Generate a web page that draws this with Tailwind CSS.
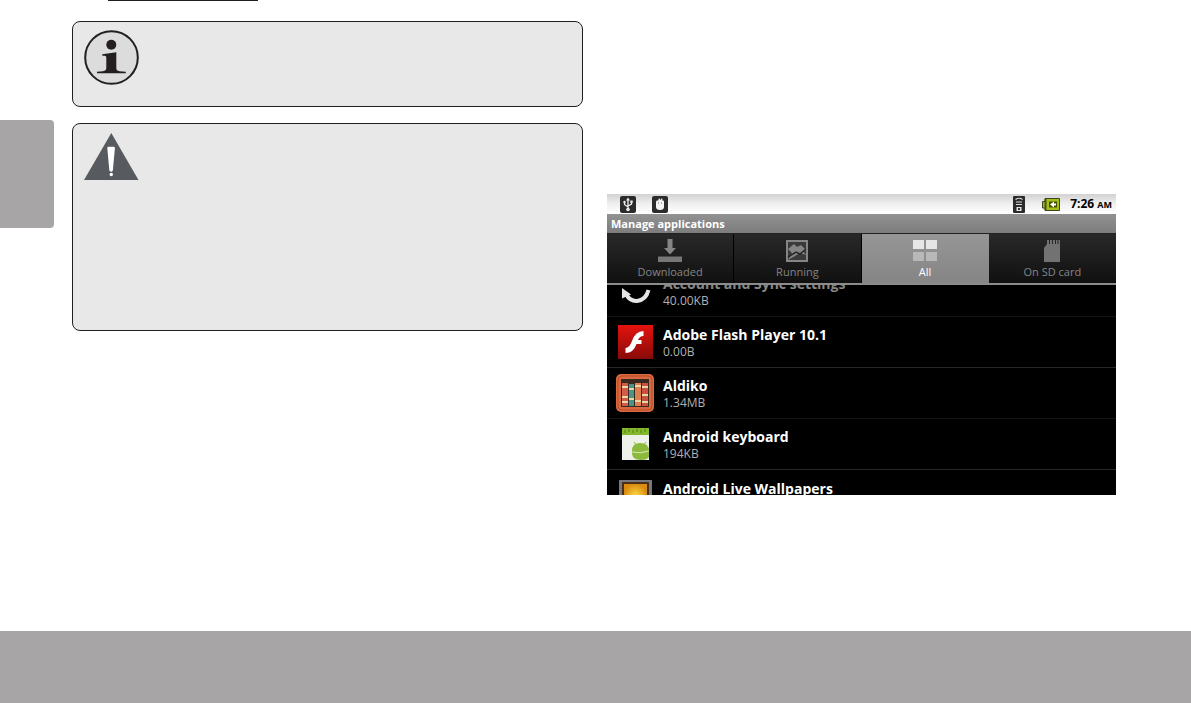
<!DOCTYPE html>
<html lang="en">
<head>
  <meta charset="UTF-8" />
  <meta name="viewport" content="width=device-width, initial-scale=1.0"/>
  <title>Manage applications</title>
  <script src="https://cdn.jsdelivr.net/npm/@tailwindcss/browser@4"></script>
</head>
<body class="bg-white min-h-screen flex flex-col font-['Open_Sans','Noto_Sans',sans-serif]">
  <main class="grow grid grid-cols-[54px_529fr_533fr] items-start pr-[75px]">
    <!-- Page side tab -->
    <aside class="mt-[120px] h-[108px] rounded-r bg-[#a7a5a6]"></aside>

    <!-- Notes -->
    <section class="ml-[18px] flex flex-col">
      <div class="ml-9 w-[150px] h-px bg-[#231f20]"></div>
      <div class="mt-5 h-[86px] rounded-lg border border-[#231f20] bg-[#e8e8e8] pl-[11px] pt-2">
        <svg class="size-[55px]" viewBox="0 0 55 55" role="img" aria-label="Note">
          <circle cx="27.5" cy="27.5" r="26.3" fill="#dcdcdc" stroke="#231f20" stroke-width="2"/>
          <circle cx="27.3" cy="14.8" r="5" fill="#231f20"/>
          <path d="M18.3 24.2l14-2V38q0 2.8 3.2 3.2l6.3.5v1.5H13v-1.5l6-.5q3.3-.4 3.3-3.2V27.5q0-1.7-1.5-1.8h-2.5z" fill="#231f20"/>
        </svg>
      </div>
      <div class="mt-4 h-[208px] rounded-lg border border-[#231f20] bg-[#e8e8e8] pl-[11px] pt-[9px]">
        <svg class="w-[55px] h-[47px]" viewBox="0 0 55 47" role="img" aria-label="Warning">
          <path d="M27.3 0L54.5 47H0z" fill="#575a5e"/>
          <path d="M23.3 15q0-1.3 1.3-1.3h5q1.3 0 1.3 1.3l-2 22q-.1 1.800-1.800 1.800t-1.800-1.800z" fill="#fff"/>
          <circle cx="27.3" cy="41.5" r="1.7" fill="#fff"/>
        </svg>
      </div>
    </section>

    <!-- Device screen -->
    <section class="ml-6 mt-[194px] h-[301px] bg-black overflow-hidden flex flex-col">
      <header class="h-5 shrink-0 flex items-center px-1 bg-linear-to-b from-[#d2d2d2] via-[#f0f0f0] to-white text-black">
        <svg class="ml-[9px] w-4 h-[17px]" viewBox="0 0 16 17">
          <rect width="16" height="17" rx="2" fill="#2b2b2b"/>
          <path d="M8 13V3M8 11L4.500 8.500V6M8 10l3.500-2V5.500" fill="none" stroke="#eee" stroke-width="1.300"/>
          <path d="M8 1.500l2 3H6z" fill="#eee"/>
          <circle cx="8" cy="13.500" r="1.800" fill="#eee"/>
          <circle cx="4.500" cy="6" r="1.200" fill="#eee"/>
          <path d="M10.300 4.500h2.400v2.400h-2.400z" fill="#eee"/>
        </svg>
        <svg class="ml-4 w-4 h-[17px]" viewBox="0 0 16 17">
          <rect width="16" height="17" rx="2" fill="#2b2b2b"/>
          <path d="M4 6l1-2 1 1 1-3 1.500 2L10 2l.8 3 1.200-.5V11q0 3-4 3t-4-3z" fill="#f4f4f4"/>
          <path d="M6.500 6v2M9.500 6v2" stroke="#aaa" stroke-width="1"/>
        </svg>
        <svg class="ml-auto w-3 h-[17px]" viewBox="0 0 12 17">
          <rect width="12" height="17" rx="1" fill="#2b2b2b"/>
          <path d="M2.500 3.500q3.500-2.500 7 0M3 6h6M3 8.500h6" fill="none" stroke="#ddd" stroke-width="1.200"/>
          <path d="M3.500 11h5v4h-5z" fill="#e5e5e5"/>
          <path d="M5 12h2v2H5z" fill="#333"/>
        </svg>
        <svg class="ml-[17px] w-[18px] h-[13px]" viewBox="0 0 18 13">
          <path d="M3 .5h14.500v12H3V10H.5V3.500H3z" fill="#a4be18" stroke="#3d4420"/>
          <path d="M3.500 1v11" stroke="#48531c" stroke-width="2"/>
          <path d="M7 3.500h8v6H7z" fill="#435000"/>
          <path d="M8 6.500l4-3v2h2v2h-2v2z" fill="#fff"/>
        </svg>
        <time class="ml-[10px] text-[12px] leading-5 font-bold">7:26 <span class="text-[9px]">AM</span></time>
      </header>
      <h1 class="h-[19px] shrink-0 px-1 bg-linear-to-b from-[#929292] to-[#7d7d7d] text-[11px] leading-[19px] font-bold text-white">Manage applications</h1>

      <nav class="h-[52px] shrink-0 grid grid-cols-4 border-t border-[#222] border-b-2 border-b-[#8c8c8c] bg-linear-to-b from-[#292929] to-[#101010] text-[11px] leading-4 text-[#858585]">
        <button type="button" class="flex flex-col items-center pt-[5px] gap-px border-r border-black">
          <svg class="size-6" viewBox="0 0 24 24">
            <path d="M9.500 0h5v9H18l-6 6.500L6 9h3.500z" fill="#858585"/>
            <path d="M0 17.500h24V23H0z" fill="#777"/>
          </svg>
          Downloaded
        </button>
        <button type="button" class="flex flex-col items-center pt-[5px] gap-px border-r border-black">
          <svg class="size-6" viewBox="0 0 24 24">
            <path d="M2 2h20v20H2z" fill="#3a3a3a" stroke="#858585" stroke-width="2"/>
            <path d="M3 10l6-5 3 3 4-2 5 5-3 1 3 4-6-2-5 3-7 4 4-7z" fill="#858585"/>
            <path d="M3 18l8-5 4 2 6-5" fill="none" stroke="#262626" stroke-width="1.500"/>
          </svg>
          Running
        </button>
        <button type="button" class="flex flex-col items-center pt-[5px] gap-px bg-linear-to-b from-[#969696] to-[#858585] text-white">
          <svg class="size-6" viewBox="0 0 24 24">
            <path d="M0 1h11v9H0zM13 1h11v9H13z" fill="#e6e6e6"/>
            <path d="M0 13h11v9H0zM13 13h11v9H13z" fill="#b8b8b8"/>
          </svg>
          All
        </button>
        <button type="button" class="flex flex-col items-center pt-[5px] gap-px">
          <svg class="size-6" viewBox="0 0 24 24">
            <path d="M7 1h13v22H4V9l3-4z" fill="#727272"/>
            <path d="M9.500 1v4M12.500 1v4M15.500 1v4M18 1v4" stroke="#252525" stroke-width="1"/>
          </svg>
          On SD card
        </button>
      </nav>

      <!-- List, scrolled part of the way into its first row -->
      <div class="grow overflow-hidden">
        <ul class="-mt-[19px] text-white">
          <li class="h-[51px] flex items-center gap-2 px-2 border-b border-[#161616]">
            <svg class="size-10" viewBox="0 0 40 40">
              <path d="M11 23q4 7.500 11 7 9-1 11.500-11" fill="none" stroke="#e5e5e5" stroke-width="4"/>
              <path d="M7 17l9 6.500-9 4z" fill="#e5e5e5"/>
            </svg>
            <div>
              <h2 class="text-[14px] leading-[19px] font-bold text-[#888]">Account and Sync settings</h2>
              <p class="text-[12px] leading-[15px] text-[#b0b0b0]">40.00KB</p>
            </div>
          </li>
          <li class="h-[51px] flex items-center gap-2 px-2 border-b border-[#282828]">
            <svg class="size-10" viewBox="0 0 40 40">
              <defs>
                <linearGradient id="red" x1="0" y1="0" x2="0" y2="1"><stop stop-color="#e5120e"/><stop offset="1" stop-color="#870b08"/></linearGradient>
              </defs>
              <path d="M3 3h35v34H3z" fill="url(#red)"/>
              <path d="M28.500 9v5q-4 0-5.500 4h3.500v4h-5q-3 9-11 9v-5q4 0 6.500-7 3.500-10 11.500-10z" fill="#fff"/>
            </svg>
            <div>
              <h2 class="text-[14px] leading-[19px] font-bold">Adobe Flash Player 10.1</h2>
              <p class="text-[12px] leading-[15px] text-[#b0b0b0]">0.00B</p>
            </div>
          </li>
          <li class="h-[51px] flex items-center gap-2 px-2 border-b border-[#161616]">
            <svg class="size-10" viewBox="0 0 40 40">
              <rect x="1" y="1" width="38" height="38" rx="5" fill="#d8683f"/>
              <rect x="3" y="3" width="34" height="34" rx="4" fill="none" stroke="#b84a28" stroke-width="1"/>
              <path d="M6 6h28v28H6z" fill="#39291f"/>
              <path d="M7 10h6v23H7z" fill="#d05b49"/>
              <path d="M14 11h5v22h-5z" fill="#4b9288"/>
              <path d="M20 10h6v23h-6z" fill="#dc8050"/>
              <path d="M27 10h6v23h-6z" fill="#c94f3e"/>
              <path d="M7 14h6M7 24h6M7 29h6M14 16h5M14 26h5M20 13h6M20 28h6M27 14h6M27 22h6M27 29h6" stroke="#ead6a0" stroke-width="2"/>
            </svg>
            <div>
              <h2 class="text-[14px] leading-[19px] font-bold">Aldiko</h2>
              <p class="text-[12px] leading-[15px] text-[#b0b0b0]">1.34MB</p>
            </div>
          </li>
          <li class="h-[51px] flex items-center gap-2 px-2 border-b border-[#282828]">
            <svg class="size-10" viewBox="0 0 40 40">
              <path d="M7 4h27v32H7z" fill="#eef0ea"/>
              <path d="M7 4h27v7H7z" fill="#85b82c"/>
              <path d="M10 6v3M14 5v3M18 6v3M22 5v3M26 6v3M30 5v3" stroke="#5f921b" stroke-width="1.500"/>
              <path d="M17 27q0-8 8-8 9 0 9 8v6q-2 3-8 3-8 0-9-6z" fill="#8cba3c"/>
              <path d="M19 18l3 4M31 18l-3 4" stroke="#8cba3c" stroke-width="1"/>
              <path d="M17 28q8 2 17-1" fill="none" stroke="#dce9bd" stroke-width="1"/>
            </svg>
            <div>
              <h2 class="text-[14px] leading-[19px] font-bold">Android keyboard</h2>
              <p class="text-[12px] leading-[15px] text-[#b0b0b0]">194KB</p>
            </div>
          </li>
          <li class="h-[51px] flex items-center gap-2 px-2">
            <svg class="size-10" viewBox="0 0 40 40">
              <defs>
                <radialGradient id="gold"><stop stop-color="#ffe04a"/><stop offset="1" stop-color="#d98c10"/></radialGradient>
              </defs>
              <path d="M4 4h33v33H4z" fill="#77777f"/>
              <path d="M7 6h27v29H7z" fill="#4a3018"/>
              <path d="M9 8h23v25H9z" fill="url(#gold)"/>
            </svg>
            <h2 class="mb-[15px] text-[14px] leading-[19px] font-bold">Android Live Wallpapers</h2>
          </li>
        </ul>
      </div>
    </section>
  </main>

  <footer class="h-[72px] bg-[#a7a5a6]"></footer>
</body>
</html>
